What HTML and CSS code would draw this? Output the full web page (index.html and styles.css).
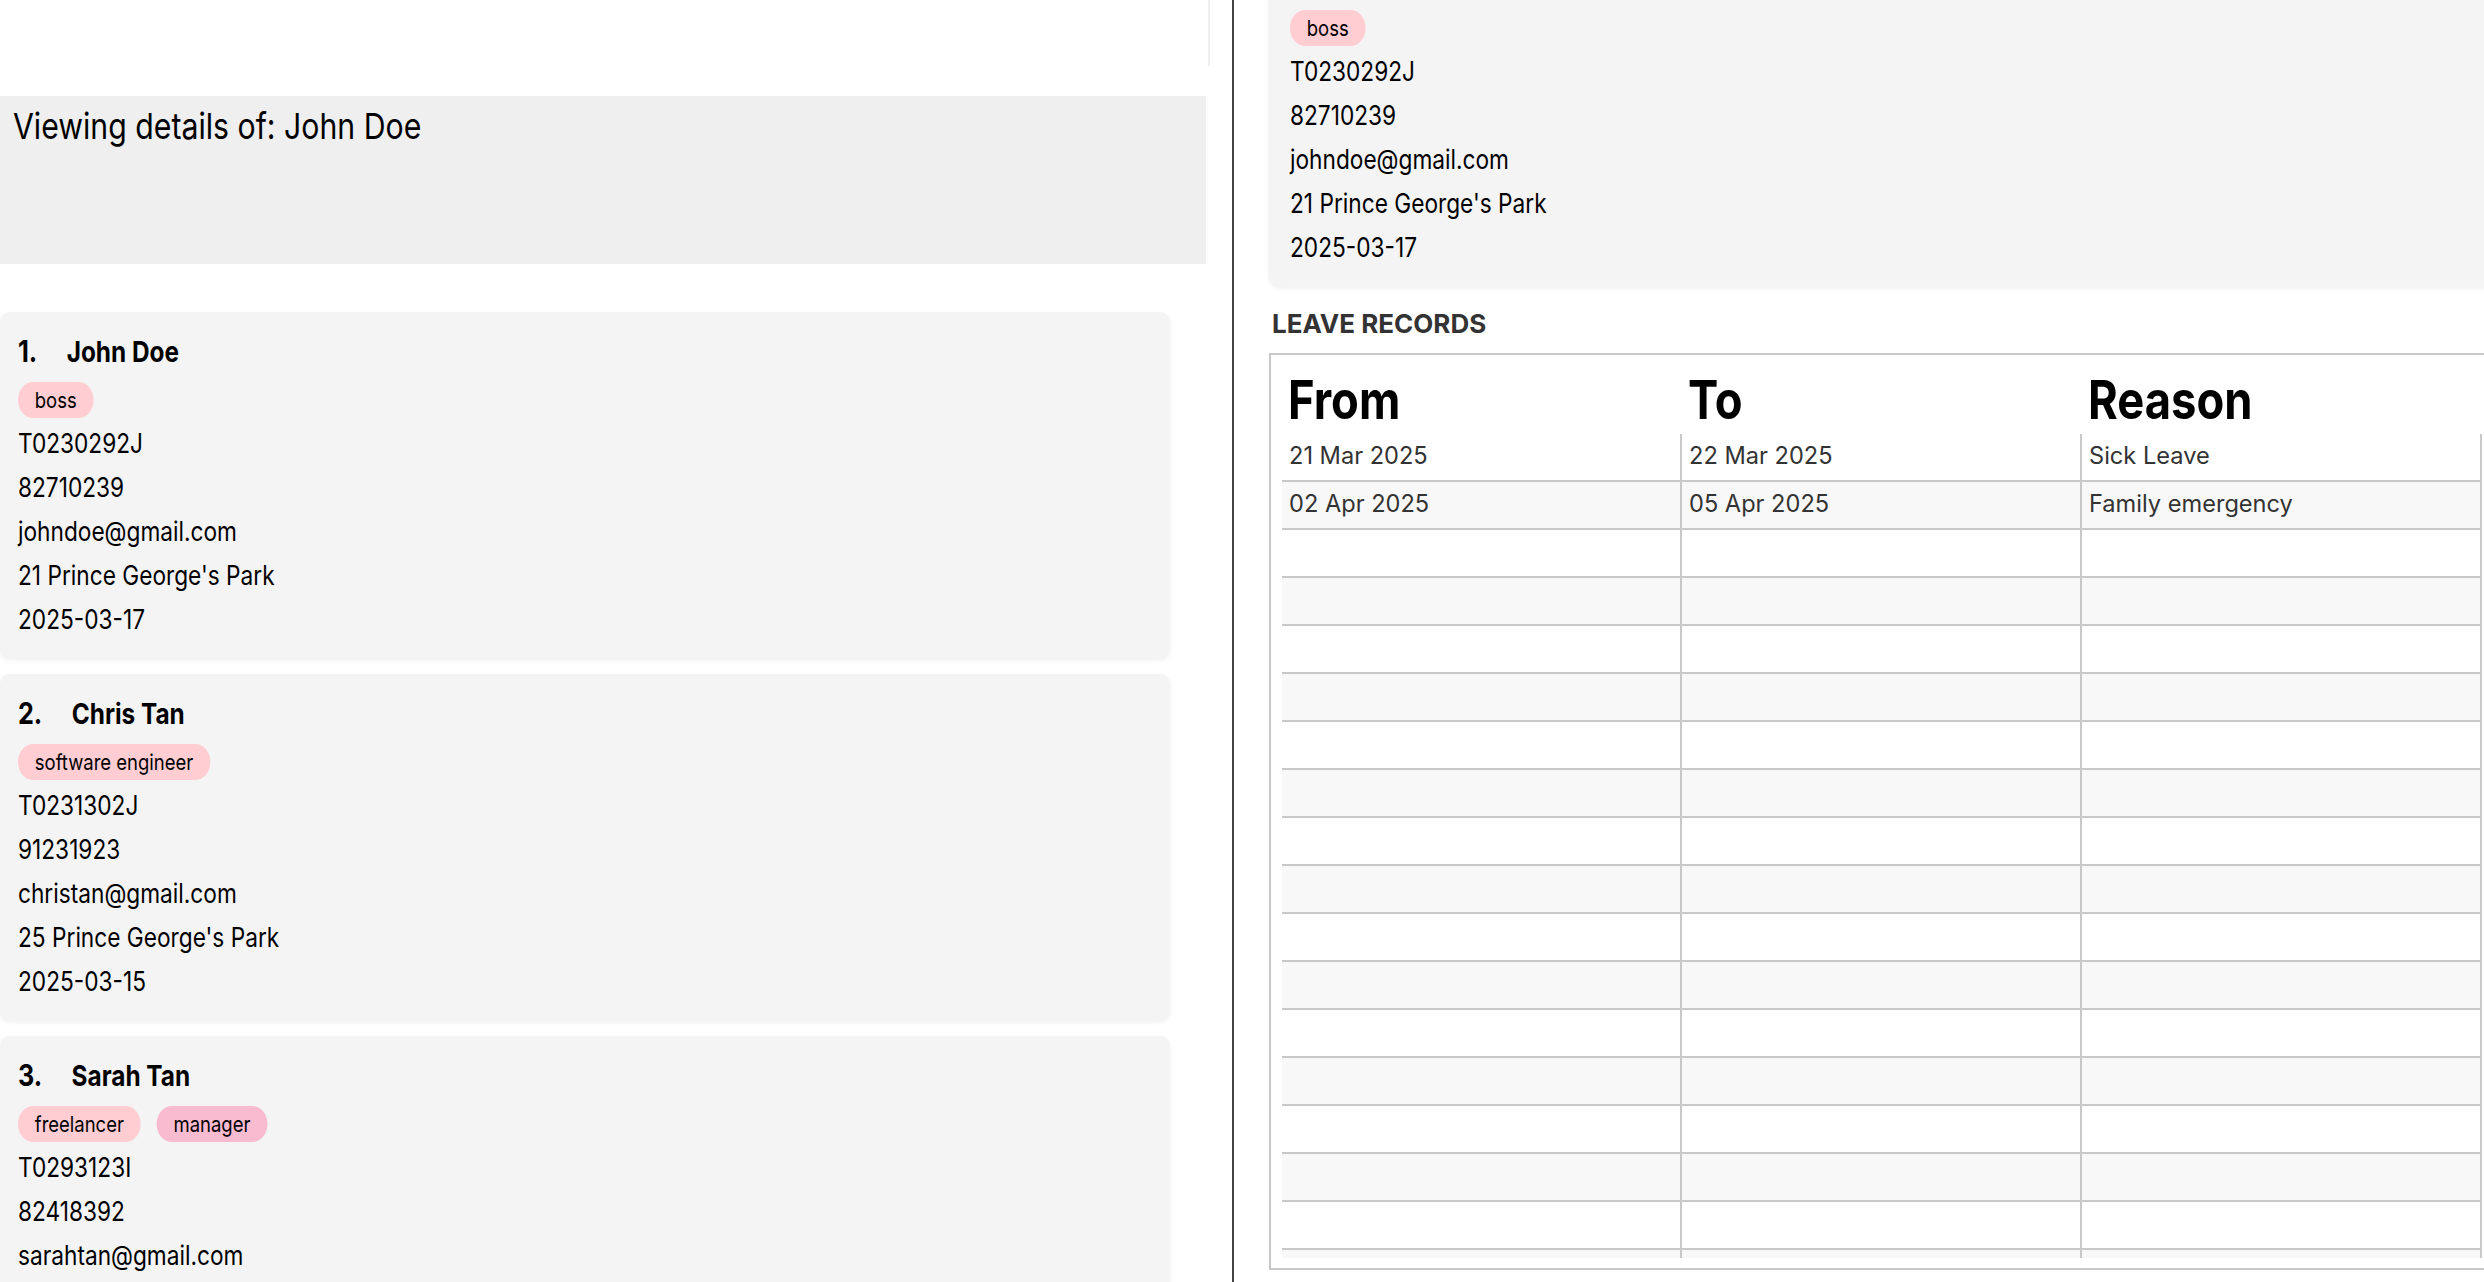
FILE: index.html
```html
<!DOCTYPE html>
<html lang="en">
<head>
<meta charset="utf-8">
<title>Address Book</title>
<link rel="stylesheet" href="styles.css">
</head>
<body>
<div class="app">
  <section class="left">
    <div class="cmd"><div class="cmd-line"></div></div>
    <div class="result"><span class="sq">Viewing details of: John Doe</span></div>
    <div class="list">
      <div class="card">
        <div class="card-body">
          <div class="name-row"><span class="idx">1.</span><span class="name">John Doe</span></div>
          <div class="tags"><span class="tag">boss</span></div>
          <div class="fields">
            <div>T0230292J</div>
            <div>82710239</div>
            <div>johndoe@gmail.com</div>
            <div>21 Prince George's Park</div>
            <div>2025-03-17</div>
          </div>
        </div>
      </div>
      <div class="card">
        <div class="card-body">
          <div class="name-row"><span class="idx">2.</span><span class="name">Chris Tan</span></div>
          <div class="tags"><span class="tag">software engineer</span></div>
          <div class="fields">
            <div>T0231302J</div>
            <div>91231923</div>
            <div>christan@gmail.com</div>
            <div>25 Prince George's Park</div>
            <div>2025-03-15</div>
          </div>
        </div>
      </div>
      <div class="card">
        <div class="card-body">
          <div class="name-row"><span class="idx">3.</span><span class="name">Sarah Tan</span></div>
          <div class="tags"><span class="tag">freelancer</span><span class="tag alt">manager</span></div>
          <div class="fields">
            <div>T0293123I</div>
            <div>82418392</div>
            <div>sarahtan@gmail.com</div>
            <div>27 Prince George's Park</div>
            <div>2025-03-12</div>
          </div>
        </div>
      </div>
    </div>
  </section>
  <div class="divider"></div>
  <section class="right">
    <div class="right-inner">
      <div class="card detail">
        <div class="card-body">
          <div class="name-row"><span class="idx">1.</span><span class="name">John Doe</span></div>
          <div class="tags"><span class="tag">boss</span></div>
          <div class="fields">
            <div>T0230292J</div>
            <div>82710239</div>
            <div>johndoe@gmail.com</div>
            <div>21 Prince George's Park</div>
            <div>2025-03-17</div>
          </div>
        </div>
      </div>
      <h2 class="section-title">LEAVE RECORDS</h2>
      <div class="leave-table">
        <div class="thead">
          <div class="th"><span class="sq">From</span></div>
          <div class="th"><span class="sq">To</span></div>
          <div class="th"><span class="sq">Reason</span></div>
        </div>
        <div class="tbody">
          <div class="tr"><div class="td">21 Mar 2025</div><div class="td">22 Mar 2025</div><div class="td">Sick Leave</div></div>
          <div class="tr"><div class="td">02 Apr 2025</div><div class="td">05 Apr 2025</div><div class="td">Family emergency</div></div>
          <div class="tr"><div class="td"></div><div class="td"></div><div class="td"></div></div>
          <div class="tr"><div class="td"></div><div class="td"></div><div class="td"></div></div>
          <div class="tr"><div class="td"></div><div class="td"></div><div class="td"></div></div>
          <div class="tr"><div class="td"></div><div class="td"></div><div class="td"></div></div>
          <div class="tr"><div class="td"></div><div class="td"></div><div class="td"></div></div>
          <div class="tr"><div class="td"></div><div class="td"></div><div class="td"></div></div>
          <div class="tr"><div class="td"></div><div class="td"></div><div class="td"></div></div>
          <div class="tr"><div class="td"></div><div class="td"></div><div class="td"></div></div>
          <div class="tr"><div class="td"></div><div class="td"></div><div class="td"></div></div>
          <div class="tr"><div class="td"></div><div class="td"></div><div class="td"></div></div>
          <div class="tr"><div class="td"></div><div class="td"></div><div class="td"></div></div>
          <div class="tr"><div class="td"></div><div class="td"></div><div class="td"></div></div>
          <div class="tr"><div class="td"></div><div class="td"></div><div class="td"></div></div>
          <div class="tr"><div class="td"></div><div class="td"></div><div class="td"></div></div>
          <div class="tr"><div class="td"></div><div class="td"></div><div class="td"></div></div>
          <div class="tr"><div class="td"></div><div class="td"></div><div class="td"></div></div>
          <div class="tr"><div class="td"></div><div class="td"></div><div class="td"></div></div>
        </div>
      </div>
    </div>
  </section>
</div>
</body>
</html>
```
FILE: styles.css
```css
:root {
  --sx: 0.84;
}

html, body {
  margin: 0;
  height: 100%;
  overflow: hidden;
  background: #ffffff;
}

body {
  font-family: Inter, "Noto Sans", sans-serif;
  color: #000000;
}

.sq {
  display: inline-block;
  white-space: nowrap;
  transform: scaleX(var(--sx));
  transform-origin: 0 50%;
}

.app {
  display: flex;
  height: 1282px;
}

/* ---------- left pane ---------- */
.left {
  width: 1210px;
  flex: none;
  overflow: hidden;
}

.cmd {
  height: 96px;
}

.cmd-line {
  height: 66px;
  border-right: 2px solid #efefef;
}

.result {
  width: 1206px;
  height: 168px;
  box-sizing: border-box;
  padding: 8px 13px;
  background: #efefef;
  font-size: 36px;
  line-height: 44px;
}

.list {
  width: 1170px;
  padding-top: 48px;
  display: flex;
  flex-direction: column;
  gap: 16px;
}

.card {
  flex: none;
  height: 346px;
  box-sizing: border-box;
  padding: 19px 18px 16px;
  background: #f4f4f4;
  border-radius: 10px;
  box-shadow: 0 2px 5px rgba(0, 0, 0, 0.07);
}

.card-body {
  transform: scaleX(var(--sx));
  transform-origin: 0 0;
  white-space: nowrap;
}

.name-row {
  display: flex;
  align-items: baseline;
  height: 40px;
  line-height: 40px;
  font-weight: 700;
}

.idx {
  font-size: 30px;
  margin-right: 35px;
}

.name {
  font-size: 29px;
}

.tags {
  display: flex;
  gap: 19px;
  height: 36px;
  margin-top: 11px;
}

.tag {
  height: 36px;
  padding: 0 20px;
  border-radius: 18px;
  background: #ffcdd2;
  font-size: 22px;
  line-height: 36px;
}

.tag.alt {
  background: #f8bbd0;
}

.fields {
  margin-top: 4px;
  font-size: 27px;
  line-height: 44px;
}

/* ---------- divider ---------- */
.divider {
  flex: none;
  width: 2px;
  margin-left: 22px;
  background: #444444;
}

/* ---------- right pane ---------- */
.right {
  flex: 1;
  min-width: 0;
  overflow: hidden;
  padding-left: 35px;
}

.right-inner {
  width: 1260px;
}

.card.detail {
  margin-top: -60px;
  padding-left: 21px;
}

.section-title {
  margin: 23px 0 14px;
  padding-left: 3px;
  font-size: 26px;
  line-height: 30px;
  font-weight: 700;
  color: #333333;
  white-space: nowrap;
}

.leave-table {
  height: 917px;
  box-sizing: border-box;
  border: 2px solid #c8c8c8;
  padding: 0 0 10px 11px;
  display: flex;
  flex-direction: column;
}

.thead {
  flex: none;
  display: flex;
  height: 79px;
}

.th {
  width: 400px;
  box-sizing: border-box;
  padding: 10px 0 0 6px;
  font-size: 54px;
  line-height: 69px;
  font-weight: 700;
}

.tbody {
  flex: 1;
  width: 1200px;
  overflow: hidden;
}

.tr {
  display: flex;
  height: 48px;
  box-sizing: border-box;
  border-bottom: 2px solid #c8c8c8;
  background: #ffffff;
}

.tr:nth-child(even) {
  background: #f8f8f8;
}

.td {
  width: 400px;
  height: 46px;
  box-sizing: border-box;
  border-right: 2px solid #c8c8c8;
  padding: 0 0 3px 7px;
  font-size: 23.6px;
  line-height: 43px;
  color: #333333;
  white-space: nowrap;
}
```
